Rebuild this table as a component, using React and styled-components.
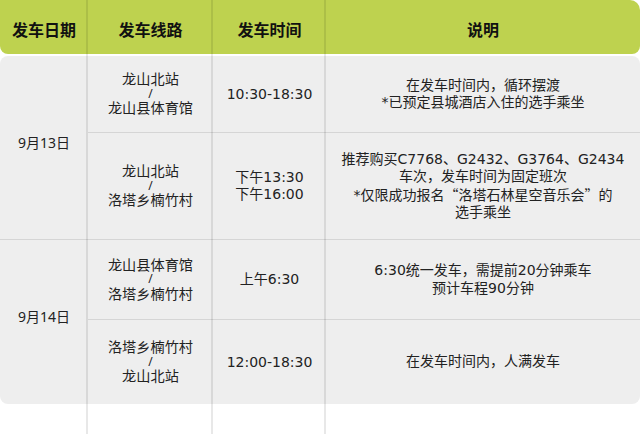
import React from "react";
import styled, { createGlobalStyle } from "styled-components";

const GlobalStyle = createGlobalStyle`
  html, body {
    margin: 0;
    padding: 0;
    background: #fff;
  }
  body {
    font-family: "Noto Sans", "Noto Sans CJK SC", sans-serif;
    color: #222;
  }
`;

const COLS = "88px 125px 113px 1fr";

const Page = styled.div`
  position: relative;
  width: 640px;
  height: 434px;
  overflow: hidden;
  display: flex;
  flex-direction: column;
  gap: 2px;
`;

const Header = styled.div`
  display: grid;
  grid-template-columns: ${COLS};
  height: 54px;
  background: #bed24f;
  border-radius: 0 10px 8px 8px;
`;

const HeadCell = styled.div`
  display: flex;
  align-items: center;
  justify-content: center;
  font-family: "Noto Sans CJK SC", sans-serif;
  font-size: 16px;
  font-weight: 700;
  color: #111;
  padding-top: 3px;
`;

const Body = styled.div`
  display: grid;
  grid-template-columns: ${COLS};
  background: #eeeeee;
  border-radius: 8px;
`;

const Cell = styled.div`
  display: flex;
  flex-direction: column;
  align-items: center;
  justify-content: center;
  text-align: center;
  font-size: 14px;
  white-space: nowrap;
  border-top: ${(p) => (p.$divider ? "1.5px solid rgba(0, 0, 0, 0.1)" : "none")};
`;

const DateCell = styled(Cell)`
  grid-row: span ${(p) => p.$span};
  padding-bottom: 12px;
`;

const RouteCell = styled(Cell)`
  line-height: 14.5px;
  font-size: 14.2px;
`;

const Slash = styled.span`
  font-size: 12px;
`;

const TimeCell = styled(Cell)`
  font-family: "DejaVu Sans", "Noto Sans CJK SC", sans-serif;
  line-height: 17px;
`;

const NoteCell = styled(Cell)`
  font-family: "DejaVu Sans", "Noto Sans CJK SC", sans-serif;
  line-height: 17.5px;
`;

const Quote = styled.span`
  font-family: "Noto Sans CJK SC", sans-serif;
`;

const ColumnLines = styled.div`
  position: absolute;
  inset: 0;
  display: grid;
  grid-template-columns: ${COLS};
  pointer-events: none;
`;

const Line = styled.div`
  border-right: 2px solid rgba(0, 0, 0, 0.09);
`;

const schedule = [
  {
    date: "9月13日",
    rows: [
      {
        route: ["龙山北站", "龙山县体育馆"],
        time: ["10:30-18:30"],
        note: ["在发车时间内，循环摆渡", "*已预定县城酒店入住的选手乘坐"],
        height: 76,
      },
      {
        route: ["龙山北站", "洛塔乡楠竹村"],
        time: ["下午13:30", "下午16:00"],
        note: [
          "推荐购买C7768、G2432、G3764、G2434",
          "车次，发车时间为固定班次",
          <>
            *仅限成功报名<Quote>“</Quote>洛塔石林星空音乐会<Quote>”</Quote>的
          </>,
          "选手乘坐",
        ],
        height: 107,
      },
    ],
  },
  {
    date: "9月14日",
    rows: [
      {
        route: ["龙山县体育馆", "洛塔乡楠竹村"],
        time: ["上午6:30"],
        note: ["6:30统一发车，需提前20分钟乘车", "预计车程90分钟"],
        height: 80,
      },
      {
        route: ["洛塔乡楠竹村", "龙山北站"],
        time: ["12:00-18:30"],
        note: ["在发车时间内，人满发车"],
        height: 85,
      },
    ],
  },
];

function App() {
  const rowHeights = schedule
    .flatMap((g) => g.rows.map((r) => `${r.height}px`))
    .join(" ");

  return (
    <>
      <GlobalStyle />
      <Page>
        <Header>
          <HeadCell>发车日期</HeadCell>
          <HeadCell>发车线路</HeadCell>
          <HeadCell>发车时间</HeadCell>
          <HeadCell>说明</HeadCell>
        </Header>
        <Body style={{ gridTemplateRows: rowHeights }}>
          {schedule.map((group, gi) => (
            <React.Fragment key={group.date}>
              <DateCell $span={group.rows.length} $divider={gi > 0}>
                {group.date}
              </DateCell>
              {group.rows.map((row, ri) => (
                <React.Fragment key={ri}>
                  <RouteCell $divider={gi > 0 || ri > 0}>
                    <span>{row.route[0]}</span>
                    <Slash>/</Slash>
                    <span>{row.route[1]}</span>
                  </RouteCell>
                  <TimeCell $divider={gi > 0 || ri > 0}>
                    {row.time.map((t) => (
                      <span key={t}>{t}</span>
                    ))}
                  </TimeCell>
                  <NoteCell $divider={gi > 0 || ri > 0}>
                    {row.note.map((n, ni) => (
                      <span key={ni}>{n}</span>
                    ))}
                  </NoteCell>
                </React.Fragment>
              ))}
            </React.Fragment>
          ))}
        </Body>
        <ColumnLines>
          <Line />
          <Line />
          <Line />
          <div />
        </ColumnLines>
      </Page>
    </>
  );
}

export default App;
